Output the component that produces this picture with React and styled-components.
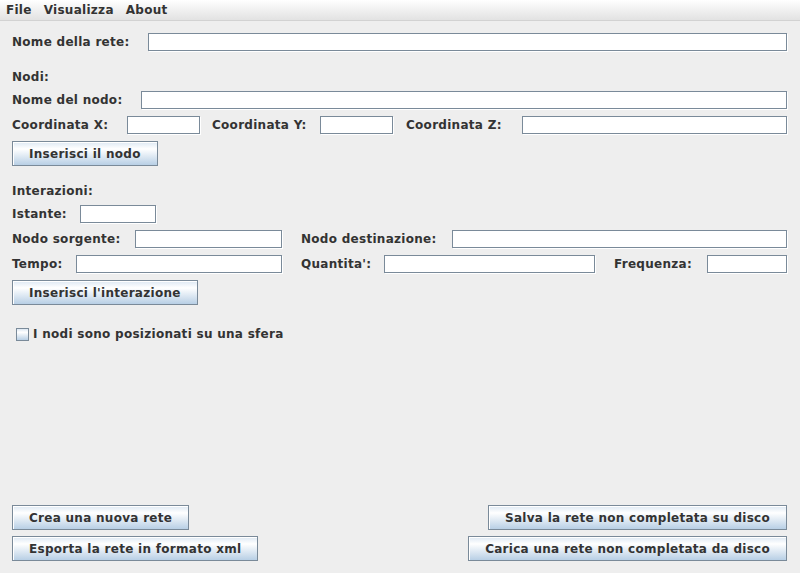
import styled, { createGlobalStyle } from "styled-components";

const Global = createGlobalStyle`
  html, body {
    margin: 0;
    padding: 0;
    background: #eeeeee;
  }
  body {
    font-family: "DejaVu Sans", "Liberation Sans", sans-serif;
    font-weight: bold;
    font-size: 12px;
    letter-spacing: 0.28px;
    color: #333333;
  }
`;

function App() {
  return (
    <Frame>
      <Global />
      <MenuBar>
        <MenuItem>File</MenuItem>
        <MenuItem>Visualizza</MenuItem>
        <MenuItem>About</MenuItem>
      </MenuBar>
      <Content>
        <Row $mt={12}>
          <Label $w={136}>Nome della rete:</Label>
          <Field $grow />
        </Row>

        <Row $mt={17}>
          <Label>Nodi:</Label>
        </Row>
        <Row $mt={5}>
          <Label $w={129}>Nome del nodo:</Label>
          <Field $grow />
        </Row>
        <Row $mt={7}>
          <Label $w={115}>Coordinata X:</Label>
          <Field $w={73} />
          <Label $w={108} $ml={12}>Coordinata Y:</Label>
          <Field $w={73} />
          <Label $w={116} $ml={13}>Coordinata Z:</Label>
          <Field $grow />
        </Row>
        <Row $mt={7}>
          <Button>Inserisci il nodo</Button>
        </Row>

        <Row $mt={16}>
          <Label>Interazioni:</Label>
        </Row>
        <Row $mt={5}>
          <Label $w={68}>Istante:</Label>
          <Field $w={76} />
        </Row>
        <Row $mt={7}>
          <Label $w={123}>Nodo sorgente:</Label>
          <Field $w={147} />
          <Label $w={151} $ml={19}>Nodo destinazione:</Label>
          <Field $grow />
        </Row>
        <Row $mt={7}>
          <Label $w={64}>Tempo:</Label>
          <Field $w={206} />
          <Label $w={83} $ml={19}>Quantita':</Label>
          <Field $w={211} />
          <Label $w={93} $ml={19}>Frequenza:</Label>
          <Field $w={80} />
        </Row>
        <Row $mt={7}>
          <Button>Inserisci l'interazione</Button>
        </Row>

        <CheckRow>
          <CheckBox />
          <span>I nodi sono posizionati su una sfera</span>
        </CheckRow>

        <Footer>
          <FooterRow>
            <Button>Crea una nuova rete</Button>
            <Button>Salva la rete non completata su disco</Button>
          </FooterRow>
          <FooterRow>
            <Button>Esporta la rete in formato xml</Button>
            <Button>Carica una rete non completata da disco</Button>
          </FooterRow>
        </Footer>
      </Content>
    </Frame>
  );
}

const Frame = styled.div`
  width: 800px;
  height: 573px;
  display: flex;
  flex-direction: column;
  background: #eeeeee;
  overflow: hidden;
`;

const MenuBar = styled.div`
  height: 20px;
  display: flex;
  align-items: center;
  background: linear-gradient(#ffffff, #e2e2e2);
  border-bottom: 1px solid #d2d2d2;
  flex-shrink: 0;
`;

const MenuItem = styled.div`
  padding: 0 6px;
  line-height: 18px;
`;

const Content = styled.div`
  flex: 1;
  display: flex;
  flex-direction: column;
  padding: 0 13px 12px 12px;
`;

const Row = styled.div`
  display: flex;
  align-items: center;
  min-height: 18px;
  margin-top: ${(p) => p.$mt || 0}px;
`;

const Label = styled.span`
  flex-shrink: 0;
  width: ${(p) => (p.$w ? `${p.$w}px` : "auto")};
  margin-left: ${(p) => p.$ml || 0}px;
  white-space: nowrap;
  line-height: 18px;
`;

const Field = styled.div`
  box-sizing: border-box;
  height: 18px;
  background: #ffffff;
  border: 1px solid #7a8a99;
  box-shadow: 1px 1px 0 #ffffff;
  flex: ${(p) => (p.$grow ? "1 1 auto" : "0 0 auto")};
  width: ${(p) => (p.$w ? `${p.$w}px` : "auto")};
`;

const Button = styled.button`
  box-sizing: border-box;
  height: 25px;
  padding: 0 16px;
  font: inherit;
  letter-spacing: inherit;
  color: #333333;
  white-space: nowrap;
  border: 1px solid #7a8a99;
  box-shadow: inset 1px 1px 0 #ffffff;
  background: linear-gradient(#dde8f3 0%, #ffffff 30%, #b8cfe5 100%);
  cursor: pointer;
`;

const CheckRow = styled.label`
  display: flex;
  align-items: center;
  height: 18px;
  margin-top: 20px;
  padding-left: 4px;
  gap: 4px;
`;

const CheckBox = styled.span`
  box-sizing: border-box;
  width: 13px;
  height: 13px;
  border: 1px solid #7a8a99;
  background: linear-gradient(#dde8f3 0%, #ffffff 30%, #b8cfe5 100%);
`;

const Footer = styled.div`
  margin-top: auto;
  display: flex;
  flex-direction: column;
  gap: 6px;
`;

const FooterRow = styled.div`
  display: flex;
  justify-content: space-between;
`;

export default App;
